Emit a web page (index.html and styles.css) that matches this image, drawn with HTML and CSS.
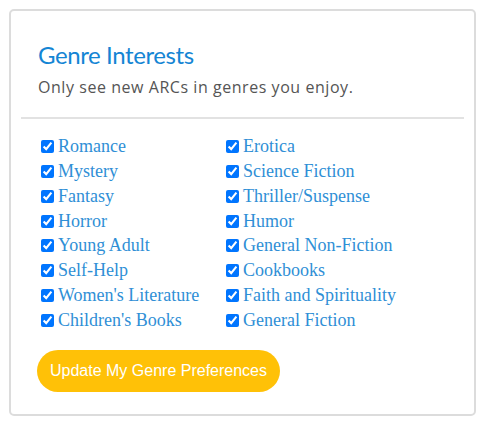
FILE: index.html
```html
<!DOCTYPE html>
<html>
<head>
<meta charset="utf-8">
<link rel="stylesheet" href="styles.css">
</head>
<body>
<div class="card">
  <div class="card-header">
    <h2 class="title">Genre Interests</h2>
    <p class="subtitle">Only see new ARCs in genres you enjoy.</p>
  </div>
  <div class="card-body">
    <div class="genres">
      <label class="genre"><input type="checkbox" checked>Romance</label>
      <label class="genre"><input type="checkbox" checked>Erotica</label>
      <label class="genre"><input type="checkbox" checked>Mystery</label>
      <label class="genre"><input type="checkbox" checked>Science Fiction</label>
      <label class="genre"><input type="checkbox" checked>Fantasy</label>
      <label class="genre"><input type="checkbox" checked>Thriller/Suspense</label>
      <label class="genre"><input type="checkbox" checked>Horror</label>
      <label class="genre"><input type="checkbox" checked>Humor</label>
      <label class="genre"><input type="checkbox" checked>Young Adult</label>
      <label class="genre"><input type="checkbox" checked>General Non-Fiction</label>
      <label class="genre"><input type="checkbox" checked>Self-Help</label>
      <label class="genre"><input type="checkbox" checked>Cookbooks</label>
      <label class="genre"><input type="checkbox" checked>Women's Literature</label>
      <label class="genre"><input type="checkbox" checked>Faith and Spirituality</label>
      <label class="genre"><input type="checkbox" checked>Children's Books</label>
      <label class="genre"><input type="checkbox" checked>General Fiction</label>
    </div>
    <button class="btn-update" type="button">Update My Genre Preferences</button>
  </div>
</div>
</body>
</html>
```

FILE: styles.css
```css
body {
  margin: 0;
  background: #fff;
}

.card {
  box-sizing: border-box;
  margin: 9px 0 0 9px;
  width: 467px;
  height: 407px;
  border: 2px solid #dcdcdc;
  border-radius: 5px;
  padding: 0 10px;
  background: #fff;
}

.card-header {
  padding: 29px 17px 20px;
  border-bottom: 2px solid #e2e2e2;
}

.title {
  margin: 0;
  font-family: Lato, "Open Sans", sans-serif;
  font-weight: 400;
  font-size: 24px;
  line-height: 30px;
  letter-spacing: -0.4px;
  color: #1485d4;
}

.subtitle {
  margin: 7px 0 0;
  font-family: "Open Sans", sans-serif;
  font-size: 16px;
  line-height: 20px;
  letter-spacing: 0.55px;
  color: #555;
}

.card-body {
  padding: 15px 16px 0;
}

.genres {
  display: grid;
  grid-template-columns: 185px 185px;
}

.genre {
  display: flex;
  align-items: center;
  height: 24.86px;
  font-family: "Liberation Serif", "Times New Roman", serif;
  font-size: 18px;
  color: #2f8fd6;
  white-space: nowrap;
}

.genre input {
  width: 13px;
  height: 13px;
  margin: 0 4px 0 4px;
  accent-color: #0075ff;
}

.btn-update {
  margin-top: 17px;
  height: 42px;
  padding: 0 13px;
  border: none;
  border-radius: 21px;
  background: #ffc107;
  color: #fff;
  font-family: "Liberation Sans", Arial, sans-serif;
  font-size: 16px;
}
```
